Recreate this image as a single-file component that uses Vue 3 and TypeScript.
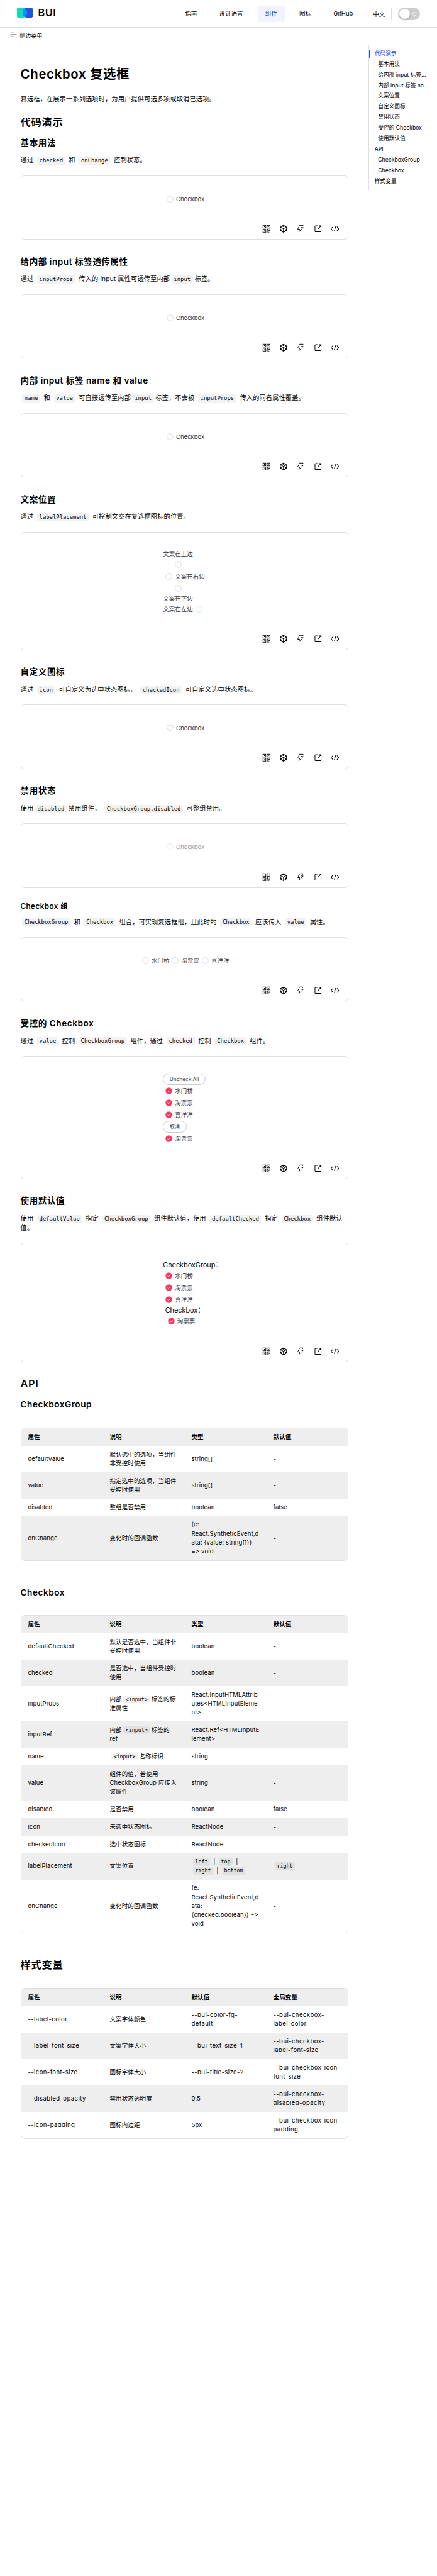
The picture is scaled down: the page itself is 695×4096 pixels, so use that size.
<script setup lang="ts">
import { ref } from 'vue'

interface Segment { text: string; code: boolean }
interface NavItem { label: string; active?: boolean }
interface TocItem { label: string; level: 1 | 2; active?: boolean }
interface Demo { title: string; desc: string; kind: string; small?: boolean }
interface ApiTable { title?: string; head: string[]; rows: string[][] }

// Splits text into lines, and each line on backticks: odd parts are inline code
function parse(source: string): Segment[][] {
  return source.split('\n').map((line) =>
    line
      .split('`')
      .map((text, i) => ({ text, code: i % 2 === 1 }))
      .filter((s) => s.text.length > 0),
  )
}

const nav: NavItem[] = [
  { label: '指南' },
  { label: '设计语言' },
  { label: '组件', active: true },
  { label: '图标' },
  { label: 'GitHub' },
]

const toc: TocItem[] = [
  { label: '代码演示', level: 1, active: true },
  { label: '基本用法', level: 2 },
  { label: '给内部 input 标签...', level: 2 },
  { label: '内部 input 标签 na...', level: 2 },
  { label: '文案位置', level: 2 },
  { label: '自定义图标', level: 2 },
  { label: '禁用状态', level: 2 },
  { label: '受控的 Checkbox', level: 2 },
  { label: '使用默认值', level: 2 },
  { label: 'API', level: 1 },
  { label: 'CheckboxGroup', level: 2 },
  { label: 'Checkbox', level: 2 },
  { label: '样式变量', level: 1 },
]

const demos: Demo[] = [
  { title: '基本用法', desc: '通过 `checked` 和 `onChange` 控制状态。', kind: 'basic' },
  { title: '给内部 input 标签透传属性', desc: '通过 `inputProps` 传入的 input 属性可透传至内部`input`标签。', kind: 'basic' },
  { title: '内部 input 标签 name 和 value', desc: '`name` 和 `value` 可直接透传至内部`input`标签，不会被 `inputProps` 传入的同名属性覆盖。', kind: 'basic' },
  { title: '文案位置', desc: '通过 `labelPlacement` 可控制文案在复选框图标的位置。', kind: 'placement' },
  { title: '自定义图标', desc: '通过 `icon` 可自定义为选中状态图标， `checkedIcon` 可自定义选中状态图标。', kind: 'heart' },
  { title: '禁用状态', desc: '使用`disabled`禁用组件， `CheckboxGroup.disabled` 可整组禁用。', kind: 'disabled' },
  { title: 'Checkbox 组', desc: '`CheckboxGroup` 和 `Checkbox` 组合，可实现复选框组，且此时的 `Checkbox` 应该传入 `value` 属性。', kind: 'group', small: true },
  { title: '受控的 Checkbox', desc: '通过 `value` 控制 `CheckboxGroup` 组件，通过 `checked` 控制 `Checkbox` 组件。', kind: 'controlled' },
  { title: '使用默认值', desc: '使用 `defaultValue` 指定 `CheckboxGroup` 组件默认值，使用 `defaultChecked` 指定 `Checkbox` 组件默认\n值。', kind: 'defaults' },
]

const groupOptions = ['水门桥', '淘票票', '喜洋洋']
const tools = ['qr', 'box', 'bolt', 'open', 'code']

const apiHead = ['属性', '说明', '类型', '默认值']
const apiTables: ApiTable[] = [
  {
    title: 'CheckboxGroup',
    head: apiHead,
    rows: [
      ['defaultValue', '默认选中的选项，当组件\n非受控时使用', 'string[]', '-'],
      ['value', '指定选中的选项，当组件\n受控时使用', 'string[]', '-'],
      ['disabled', '整组是否禁用', 'boolean', 'false'],
      ['onChange', '变化时的回调函数', '(e:\nReact.SyntheticEvent,d\nata: {value: string[]})\n=> void', '-'],
    ],
  },
  {
    title: 'Checkbox',
    head: apiHead,
    rows: [
      ['defaultChecked', '默认是否选中，当组件非\n受控时使用', 'boolean', '-'],
      ['checked', '是否选中，当组件受控时\n使用', 'boolean', '-'],
      ['inputProps', '内部`<input>`标签的标\n准属性', 'React.InputHTMLAttrib\nutes<HTMLInputEleme\nnt>', '-'],
      ['inputRef', '内部`<input>`标签的\nref', 'React.Ref<HTMLInputE\nlement>', '-'],
      ['name', '`<input>`名称标识', 'string', '-'],
      ['value', '组件的值，若使用\nCheckboxGroup 应传入\n该属性', 'string', '-'],
      ['disabled', '是否禁用', 'boolean', 'false'],
      ['icon', '未选中状态图标', 'ReactNode', '-'],
      ['checkedIcon', '选中状态图标', 'ReactNode', '-'],
      ['labelPlacement', '文案位置', '`left` | `top` |\n`right` | `bottom`', '`right`'],
      ['onChange', '变化时的回调函数', '(e:\nReact.SyntheticEvent,d\nata:\n{checked:boolean}) =>\nvoid', '-'],
    ],
  },
]

const styleTable: ApiTable = {
  head: ['属性', '说明', '默认值', '全局变量'],
  rows: [
    ['--label-color', '文案字体颜色', '--bui-color-fg-\ndefault', '--bui-checkbox-\nlabel-color'],
    ['--label-font-size', '文案字体大小', '--bui-text-size-1', '--bui-checkbox-\nlabel-font-size'],
    ['--icon-font-size', '图标字体大小', '--bui-title-size-2', '--bui-checkbox-icon-\nfont-size'],
    ['--disabled-opacity', '禁用状态透明度', '0.5', '--bui-checkbox-\ndisabled-opacity'],
    ['--icon-padding', '图标内边距', '5px', '--bui-checkbox-icon-\npadding'],
  ],
}

const allTables: ApiTable[] = [...apiTables, styleTable]
const dark = ref(false)
</script>

<template>
  <div class="page">
    <svg class="sprite" width="0" height="0" aria-hidden="true">
      <symbol id="i-circle" viewBox="0 0 18 18">
        <circle cx="9" cy="9" r="7.1" fill="none" stroke="#c6c8ce" stroke-width="1" />
      </symbol>
      <symbol id="i-heart" viewBox="0 0 18 18">
        <path d="M9 16 C6 13.6 1.7 10.4 1.7 6.3 C1.7 3.9 3.3 2.3 5.2 2.3 C6.9 2.3 8.2 3.2 9 4.5 C9.8 3.2 11.1 2.3 12.8 2.3 C14.7 2.3 16.3 3.9 16.3 6.3 C16.3 10.4 12 13.6 9 16 Z" fill="none" stroke="#c6c8ce" stroke-width="1" />
      </symbol>
      <symbol id="i-checked" viewBox="0 0 18 18">
        <circle cx="9" cy="9" r="7.6" fill="#ff335c" />
        <path d="M6 9.2 L8.2 11.3 L12 7.2" fill="none" stroke="#fff" stroke-width="1.3" />
      </symbol>
      <symbol id="t-qr" viewBox="0 0 20 20">
        <g fill="none" stroke="#000" stroke-width="1.4">
          <rect x="1.9" y="1.9" width="6.6" height="6.6" />
          <rect x="11.5" y="1.9" width="6.6" height="6.6" />
          <rect x="1.9" y="11.5" width="6.6" height="6.6" />
        </g>
        <g fill="#000">
          <rect x="4.4" y="4.4" width="1.6" height="1.6" />
          <rect x="14" y="4.4" width="1.6" height="1.6" />
          <rect x="4.4" y="14" width="1.6" height="1.6" />
          <path d="M10.8 10.8h4.2v3h2.2v-3h1.6v4.8h-5v-3h-1.2v6.2h-1.8z" />
          <rect x="14.2" y="17.2" width="1.6" height="1.6" />
          <rect x="17.2" y="17.2" width="1.6" height="1.6" />
        </g>
      </symbol>
      <symbol id="t-box" viewBox="0 0 20 20">
        <path d="M10 1.8 L17.3 5.9 V14.1 L10 18.2 L2.7 14.1 V5.9 Z M2.7 5.9 L10 10 L17.3 5.9 M10 10 V18.2" fill="none" stroke="#000" stroke-width="1.5" />
        <path d="M10 1.3 L14.2 3.7 L10 6 L5.8 3.7 Z M2.2 10 L5.6 11.9 V16 L2.2 14.2 Z M17.8 10 L14.4 11.9 V16 L17.8 14.2 Z" fill="#000" />
      </symbol>
      <symbol id="t-bolt" viewBox="0 0 20 20">
        <path d="M8.2 1.9 H16.4 L12.5 7.3 H16.6 L6.2 17.6 L8.3 11.1 H3.6 Z" fill="none" stroke="#000" stroke-width="1.4" stroke-linejoin="round" />
      </symbol>
      <symbol id="t-open" viewBox="0 0 20 20">
        <path d="M8.6 2.9 H4.4 Q2.9 2.9 2.9 4.4 V15.6 Q2.9 17.1 4.4 17.1 H15.6 Q17.1 17.1 17.1 15.6 V10.2 M11.8 2.9 H17.1 V7.6 M17.1 2.9 L9.3 10.9" fill="none" stroke="#000" stroke-width="1.5" />
      </symbol>
      <symbol id="t-code" viewBox="0 0 20 20">
        <path d="M5.4 5 L1 10 L5.4 15 M14.6 5 L19 10 L14.6 15 M11.8 4.2 L8.2 15.8" fill="none" stroke="#000" stroke-width="1.5" />
      </symbol>
    </svg>

    <header class="topbar">
      <div class="brand">
        <svg class="logo" viewBox="0 0 37 24">
          <path d="M4 0 H12 A12 12 0 0 1 12 24 H4 Q0 24 0 20 V4 Q0 0 4 0 Z" fill="#0fdcb4" />
          <path d="M33 0 H25 A12 12 0 0 0 25 24 H33 Q37 24 37 20 V4 Q37 0 33 0 Z" fill="#2354e0" />
          <path d="M18.5 1.9 A12 12 0 0 1 18.5 22.1 A12 12 0 0 1 18.5 1.9 Z" fill="#0092ff" />
        </svg>
        <span class="brand-name">BUI</span>
      </div>
      <nav class="nav">
        <a v-for="item in nav" :key="item.label" class="nav-item" :class="{ active: item.active }">{{ item.label }}</a>
        <a class="lang">中文</a>
        <span class="divider"></span>
        <button class="toggle" type="button" @click="dark = !dark">
          <span class="knob"></span>
          <svg class="sun" viewBox="0 0 16 16">
            <circle cx="8" cy="8" r="4.2" fill="none" stroke="#fff" stroke-width="1" />
            <path d="M8 .6V2M8 14v1.4M.6 8H2M14 8h1.4M2.8 2.8l1 1M12.2 12.2l1 1M2.8 13.2l1-1M12.2 3.8l1-1" stroke="#fff" stroke-width="1.2" />
          </svg>
        </button>
      </nav>
    </header>

    <div class="side-toggle">
      <svg class="menu-icon" viewBox="0 0 16 16">
        <path d="M.5 2H10M.5 6H15.5M.5 10H10M.5 14H15.5" stroke="#000" stroke-width="1.2" />
      </svg>
      <span>侧边菜单</span>
    </div>

    <div class="body">
      <main class="content">
        <h1>Checkbox 复选框</h1>
        <p class="intro">复选框，在展示一系列选项时，为用户提供可选多项或取消已选项。</p>
        <h2 class="first">代码演示</h2>

        <section v-for="demo in demos" :key="demo.title" class="section" :class="{ small: demo.small }">
          <h3>{{ demo.title }}</h3>
          <div class="desc">
            <p v-for="(line, l) in parse(demo.desc)" :key="l"><template v-for="(s, i) in line" :key="i"><code v-if="s.code">{{ s.text }}</code><template v-else>{{ s.text }}</template></template></p>
          </div>
          <div class="card">
            <div class="stage">
              <label v-if="demo.kind === 'basic' || demo.kind === 'heart' || demo.kind === 'disabled'" class="check" :class="{ disabled: demo.kind === 'disabled' }">
                <svg class="mark"><use :href="demo.kind === 'heart' ? '#i-heart' : '#i-circle'" /></svg>
                <span>Checkbox</span>
              </label>

              <div v-else-if="demo.kind === 'placement'" class="stack">
                <label class="check vertical"><span>文案在上边</span><svg class="mark"><use href="#i-circle" /></svg></label>
                <label class="check"><svg class="mark"><use href="#i-circle" /></svg><span>文案在右边</span></label>
                <label class="check vertical"><svg class="mark"><use href="#i-circle" /></svg><span>文案在下边</span></label>
                <label class="check"><span>文案在左边</span><svg class="mark"><use href="#i-circle" /></svg></label>
              </div>

              <div v-else-if="demo.kind === 'group'" class="row">
                <label v-for="o in groupOptions" :key="o" class="check"><svg class="mark"><use href="#i-circle" /></svg><span>{{ o }}</span></label>
              </div>

              <div v-else-if="demo.kind === 'controlled'" class="stack">
                <button class="pill" type="button">Uncheck All</button>
                <label v-for="o in groupOptions" :key="o" class="check"><svg class="mark"><use href="#i-checked" /></svg><span>{{ o }}</span></label>
                <button class="pill" type="button">取消</button>
                <label class="check"><svg class="mark"><use href="#i-checked" /></svg><span>淘票票</span></label>
              </div>

              <div v-else class="stack">
                <div class="caption">CheckboxGroup：</div>
                <label v-for="o in groupOptions" :key="o" class="check"><svg class="mark"><use href="#i-checked" /></svg><span>{{ o }}</span></label>
                <div class="inset">
                  <div class="caption">Checkbox：</div>
                  <label class="check"><svg class="mark"><use href="#i-checked" /></svg><span>淘票票</span></label>
                </div>
              </div>
            </div>
            <div class="tools">
              <svg v-for="t in tools" :key="t" class="tool"><use :href="'#t-' + t" /></svg>
            </div>
          </div>
        </section>

        <h2 class="api">API</h2>
        <template v-for="(table, t) in allTables" :key="t">
          <h3 v-if="table.title" class="table-title">{{ table.title }}</h3>
          <h2 v-else class="vars">样式变量</h2>
          <div class="table">
            <div class="tr th">
              <div v-for="h in table.head" :key="h" class="td">{{ h }}</div>
            </div>
            <div v-for="row in table.rows" :key="row[0]" class="tr">
              <div v-for="(cell, c) in row" :key="c" class="td" :class="{ token: cell.startsWith('--') }">
                <div v-for="(line, l) in parse(cell)" :key="l" class="line"><template v-for="(s, i) in line" :key="i"><code v-if="s.code">{{ s.text }}</code><template v-else>{{ s.text }}</template></template></div>
              </div>
            </div>
          </div>
        </template>
      </main>

      <aside class="toc">
        <a v-for="item in toc" :key="item.label" class="toc-item" :class="{ active: item.active, sub: item.level === 2 }">{{ item.label }}</a>
      </aside>
    </div>
  </div>
</template>

<style>
html,
body {
  margin: 0;
  background: #fff;
}
</style>

<style scoped>
.page {
  width: 1024px;
  height: 6035px;
  overflow: hidden;
  zoom: 0.6787;
  color: #000;
  background: #fff;
  font-family: Inter, 'Noto Sans CJK SC', sans-serif;
  font-size: 14px;
}
.sprite {
  display: block;
}
.topbar {
  display: flex;
  justify-content: space-between;
  align-items: center;
  height: 64px;
  padding: 0 40px;
  border-bottom: 1px solid #e0e0e0;
}
.brand {
  display: flex;
  align-items: center;
  gap: 12px;
  margin-top: -4px;
}
.logo {
  width: 37px;
  height: 24px;
}
.brand-name {
  font-size: 24px;
  font-weight: 600;
  line-height: 24px;
  letter-spacing: 0.8px;
}
.nav {
  display: flex;
  align-items: center;
  gap: 16px;
}
.nav-item {
  height: 38px;
  padding: 0 18px;
  border-radius: 4px;
  line-height: 38px;
}
.nav-item.active {
  color: #2354e0;
  background: #f1f4ff;
  font-weight: 600;
}
.lang {
  margin-left: 13px;
}
.divider {
  width: 1px;
  height: 30px;
  margin-left: -1px;
  background: #e0e0e0;
}
.toggle {
  display: flex;
  align-items: center;
  gap: 4px;
  width: 51px;
  height: 30px;
  margin-left: -1px;
  padding: 0 3px;
  border: 0;
  border-radius: 15px;
  background: #ccc;
}
.knob {
  width: 24px;
  height: 24px;
  border-radius: 50%;
  background: #fff;
  box-shadow: 0 2px 4px rgba(0, 0, 0, 0.25);
}
.sun {
  width: 15px;
  height: 15px;
}
.side-toggle {
  display: flex;
  align-items: center;
  gap: 6px;
  height: 36.5px;
  padding-left: 24px;
  font-size: 13.3px;
}
.menu-icon {
  width: 16px;
  height: 16px;
}
.body {
  display: flex;
  align-items: flex-start;
}
.content {
  width: 768px;
  margin-left: 48px;
}
h1,
h2,
h3,
p {
  margin: 0;
  white-space: pre;
}
h1,
h2,
h3 {
  font-weight: 600;
}
h1 {
  height: 40px;
  margin-top: 51.7px;
  font-size: 30px;
  line-height: 40px;
  letter-spacing: 1px;
}
p {
  height: 22px;
  font-size: 15px;
  line-height: 22px;
  letter-spacing: 0.25px;
}
.intro {
  margin-top: 27px;
}
h2 {
  height: 36px;
  font-size: 24px;
  line-height: 36px;
  letter-spacing: 1px;
}
h2.first {
  margin-top: 25px;
  margin-bottom: 15.5px;
}
h3 {
  height: 30px;
  font-size: 20px;
  line-height: 30px;
  letter-spacing: 0.8px;
}
.section {
  margin-bottom: 36px;
}
.section h3 {
  margin-bottom: 15.4px;
}
.section.small {
  margin-top: -4px;
}
.section.small h3 {
  height: 24px;
  margin-bottom: 12.9px;
  font-size: 17px;
  line-height: 24px;
  letter-spacing: 0.75px;
}
code {
  margin: 0 4px;
  padding: 0.15em 0.4em;
  border-radius: 4px;
  background: rgba(0, 0, 0, 0.05);
  font-family: 'DejaVu Sans Mono', monospace;
  font-size: 0.875em;
  line-height: 1;
  letter-spacing: 0;
}
.card {
  display: flex;
  flex-direction: column;
  margin-top: 24px;
  border: 1px solid #e0e0e0;
  border-radius: 8px;
}
.stage {
  display: flex;
  justify-content: center;
  padding: 40px 0;
}
.tools {
  display: flex;
  justify-content: flex-end;
  gap: 20px;
  height: 20px;
  padding: 6px 20px 14.3px;
}
.tool {
  width: 20px;
  height: 20px;
}
.check {
  display: flex;
  align-items: center;
  color: #303547;
  line-height: 28px;
}
.check.vertical {
  flex-direction: column;
  line-height: 21px;
}
.check.disabled {
  opacity: 0.5;
}
.mark {
  flex: none;
  width: 18px;
  height: 18px;
  padding: 5px;
}
.row {
  display: flex;
}
.stack {
  display: flex;
  flex-direction: column;
  align-items: flex-start;
  width: 100px;
}
.pill {
  height: 27px;
  padding: 0 14px;
  border: 1px solid #c9cbd2;
  border-radius: 14px;
  background: #fff;
  color: #555a6b;
  font-family: inherit;
  font-size: 12px;
  font-weight: 500;
  line-height: 24px;
  white-space: nowrap;
}
.caption {
  height: 22px;
  font-size: 16px;
  line-height: 22px;
  white-space: nowrap;
}
.inset {
  padding-left: 5px;
}
h2.api {
  margin-top: -3.4px;
}
.table-title {
  margin-top: 16px;
}
.table {
  margin-top: 39.2px;
  overflow: hidden;
  border: 1px solid #e0e0e0;
  border-radius: 10px;
}
.table + .table-title {
  margin-top: 58.3px;
}
.vars {
  margin-top: 56px;
}
.vars + .table {
  margin-top: 36.6px;
}
.tr {
  display: grid;
  grid-template-columns: repeat(4, 191.6px);
  align-items: center;
  padding: 10px 0;
}
.tr:nth-child(odd) {
  background: #eee;
}
.th {
  font-weight: 600;
}
.td {
  padding-left: 16px;
  line-height: 20.93px;
  letter-spacing: 0.2px;
  white-space: nowrap;
}
.line {
  height: 20.93px;
  white-space: pre;
}
.token {
  letter-spacing: 0.65px;
}
.toc {
  display: flex;
  flex-direction: column;
  width: 130px;
  margin: 4px 0 0 48px;
  padding: 7px 0;
  border-left: 1px solid #e0e0e0;
}
.toc-item {
  height: 19px;
  margin: 3px 0 3px -1px;
  padding-left: 12px;
  border-left: 1px solid transparent;
  font-size: 12.8px;
  line-height: 19px;
  white-space: nowrap;
}
.toc-item.sub {
  padding-left: 20px;
}
.toc-item.active {
  border-left-color: #2354e0;
  color: #2354e0;
}
</style>
